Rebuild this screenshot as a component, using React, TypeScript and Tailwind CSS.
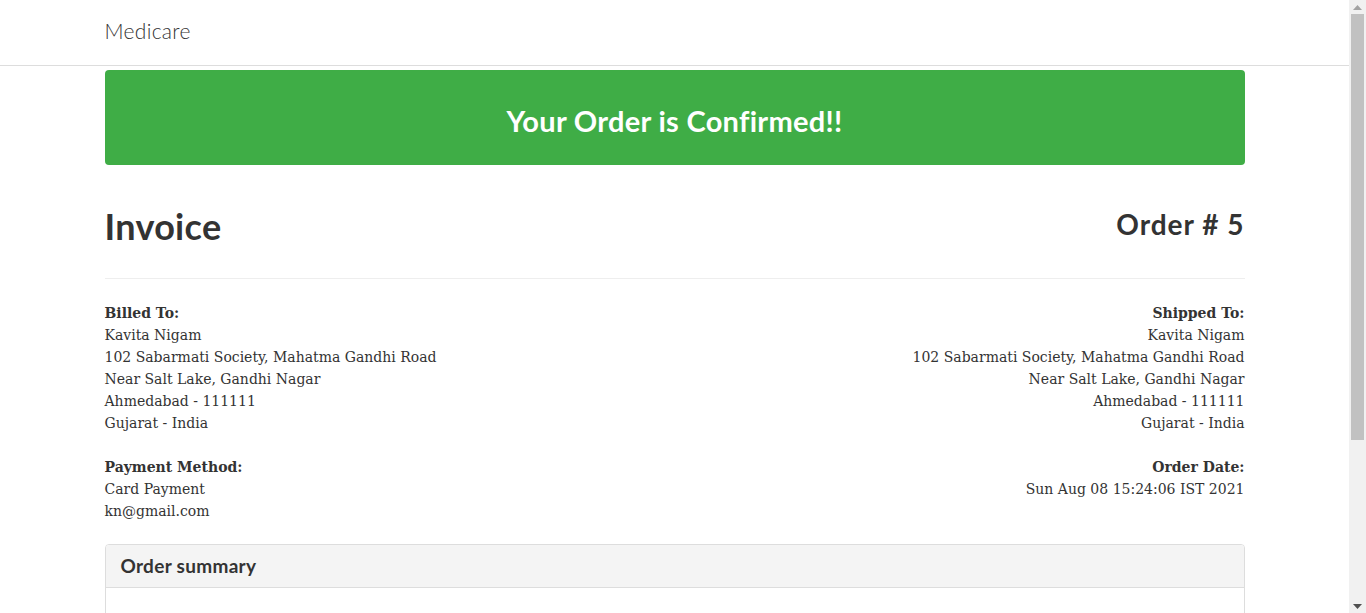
import React from 'react';

const heading = { fontFamily: 'Lato, "Open Sans", sans-serif' };
const serif = { fontFamily: '"DejaVu Serif", "Liberation Serif", serif' };

const address = [
  'Kavita Nigam',
  '102 Sabarmati Society, Mahatma Gandhi Road',
  'Near Salt Lake, Gandhi Nagar',
  'Ahmedabad - 111111',
  'Gujarat - India',
];

const items = [
  { name: 'Paracetamol 500mg', price: '₹ 40', qty: 2, total: '₹ 80' },
  { name: 'Vitamin C Tablets', price: '₹ 120', qty: 1, total: '₹ 120' },
];

// classic window scrollbar, drawn (headless browser hides the real one)
function ScrollBar() {
  return (
    <div className="w-[17px] h-full bg-[#f1f1f1] flex flex-col shrink-0">
      <div className="h-[14px] flex items-center justify-center">
        <svg width="9" height="5" viewBox="0 0 9 5"><path d="M4.5 0 L9 5 L0 5 Z" fill="#a3a3a3" /></svg>
      </div>
      <div className="h-[426px] ml-[2px] mr-[2px] bg-[#c1c1c1]" />
      <div className="flex-1" />
      <div className="h-[14px] flex items-center justify-center">
        <svg width="9" height="5" viewBox="0 0 9 5"><path d="M0 0 L9 0 L4.5 5 Z" fill="#505050" /></svg>
      </div>
    </div>
  );
}

export default function App() {
  return (
    <div className="flex h-screen overflow-hidden bg-white text-[#333]" style={serif}>
      <main className="flex-1 overflow-y-auto [scrollbar-width:none]">
        <div className="min-h-[842px]">
          {/* navbar */}
          <nav className="h-[66px] border-b border-[#dddddd] bg-white">
            <div className="mx-auto w-[1170px] px-[15px] h-full flex items-center">
              <span className="text-[21px] font-light tracking-[0.3px] text-[#333] pb-[3px]" style={heading}>Medicare</span>
            </div>
          </nav>

          <div className="mx-auto w-[1170px] px-[15px] pt-[4px] pb-[40px]">
            {/* confirm banner */}
            <div className="h-[95px] rounded-[4px] bg-[#3fad46] flex items-center justify-center">
              <h3 className="text-[29px] font-bold tracking-[0.3px] text-white pt-[6px]" style={heading}>Your Order is Confirmed!!</h3>
            </div>

            {/* invoice title */}
            <div className="flex justify-between items-start pt-[37px] pb-[30px] border-b border-[#eeeeee]">
              <h2 className="text-[36px] font-bold leading-[46px] tracking-[0.3px] pt-[1px] -mb-[1px]" style={heading}>Invoice</h2>
              <h3 className="text-[28px] font-bold leading-[36px] pt-[4px] tracking-[1px]" style={heading}>Order # 5</h3>
            </div>

            {/* addresses */}
            <div className="pt-[23px] text-[14px] leading-[22px]">
              <div className="flex justify-between">
                <div>
                  <div className="font-bold">Billed To:</div>
                  {address.map((l) => <div key={l}>{l}</div>)}
                </div>
                <div className="text-right">
                  <div className="font-bold">Shipped To:</div>
                  {address.map((l) => <div key={l}>{l}</div>)}
                </div>
              </div>
              <div className="flex justify-between mt-[22px]">
                <div>
                  <div className="font-bold">Payment Method:</div>
                  <div>Card Payment</div>
                  <div>kn@gmail.com</div>
                </div>
                <div className="text-right">
                  <div className="font-bold">Order Date:</div>
                  <div>Sun Aug 08 15:24:06 IST 2021</div>
                </div>
              </div>
            </div>

            {/* order summary */}
            <div className="mt-[22px] border border-[#dddddd] rounded-[4px] overflow-hidden">
              <div className="h-[43px] bg-[#f4f4f4] border-b border-[#dddddd] px-[15px] flex items-center">
                <h3 className="text-[19px] font-bold tracking-[0.3px]" style={heading}>Order summary</h3>
              </div>
              <div className="px-[15px] py-[15px]">
                <table className="w-full text-[14px] leading-[22px]">
                  <thead>
                    <tr className="border-b-2 border-[#dddddd]">
                      <th className="text-left py-[8px]">Item</th>
                      <th className="text-center py-[8px]">Price</th>
                      <th className="text-center py-[8px]">Quantity</th>
                      <th className="text-right py-[8px]">Totals</th>
                    </tr>
                  </thead>
                  <tbody>
                    {items.map((it) => (
                      <tr key={it.name} className="border-b border-[#dddddd]">
                        <td className="py-[8px]">{it.name}</td>
                        <td className="text-center py-[8px]">{it.price}</td>
                        <td className="text-center py-[8px]">{it.qty}</td>
                        <td className="text-right py-[8px]">{it.total}</td>
                      </tr>
                    ))}
                    <tr>
                      <td className="py-[8px]"></td>
                      <td className="py-[8px]"></td>
                      <td className="text-center py-[8px] font-bold">Total</td>
                      <td className="text-right py-[8px] font-bold">₹ 200</td>
                    </tr>
                  </tbody>
                </table>
              </div>
            </div>
          </div>
        </div>
      </main>
      <ScrollBar />
    </div>
  );
}
